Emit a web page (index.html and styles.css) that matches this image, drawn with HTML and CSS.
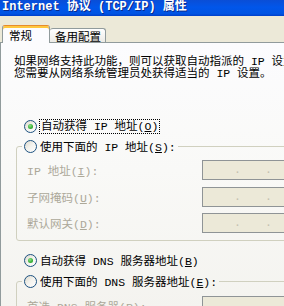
FILE: index.html
```html
<!DOCTYPE html>
<html lang="zh-CN">
    <head>
        <title>Internet 协议 (TCP/IP) 属性</title>
        <meta charset="utf-8">
        <link rel="stylesheet" href="styles.css">
    </head>
    <body>
        <div class="window">
            <div class="titlebar">Internet 协议 (TCP/IP) 属性</div>

            <div class="frame">
                <div class="tabs">
                    <div class="tab active">常规</div>
                    <div class="tab">备用配置</div>
                </div>

                <div class="page">
                    <p class="intro">如果网络支持此功能，则可以获取自动指派的 IP 设置。否则，<br>您需要从网络系统管理员处获得适当的 IP 设置。</p>

                    <label class="radio focus">
                        <span class="dot on"></span>
                        <span class="text">自动获得 IP 地址(<u>O</u>)</span>
                    </label>

                    <fieldset class="group">
                        <legend>
                            <label class="radio">
                                <span class="dot"></span>
                                <span class="text">使用下面的 IP 地址(<u>S</u>):</span>
                            </label>
                        </legend>
                        <div class="row">
                            <span class="label">IP 地址(<u>I</u>):</span>
                            <div class="ip"><span></span><i>.</i><span></span><i>.</i><span></span><i>.</i><span></span></div>
                        </div>
                        <div class="row">
                            <span class="label">子网掩码(<u>U</u>):</span>
                            <div class="ip"><span></span><i>.</i><span></span><i>.</i><span></span><i>.</i><span></span></div>
                        </div>
                        <div class="row">
                            <span class="label">默认网关(<u>D</u>):</span>
                            <div class="ip"><span></span><i>.</i><span></span><i>.</i><span></span><i>.</i><span></span></div>
                        </div>
                    </fieldset>

                    <label class="radio third">
                        <span class="dot on"></span>
                        <span class="text">自动获得 DNS 服务器地址(<u>B</u>)</span>
                    </label>

                    <fieldset class="group second">
                        <legend>
                            <label class="radio">
                                <span class="dot"></span>
                                <span class="text">使用下面的 DNS 服务器地址(<u>E</u>):</span>
                            </label>
                        </legend>
                        <div class="row">
                            <span class="label">首选 DNS 服务器(<u>P</u>):</span>
                            <div class="ip"><span></span><i>.</i><span></span><i>.</i><span></span><i>.</i><span></span></div>
                        </div>
                        <div class="row">
                            <span class="label">备用 DNS 服务器(<u>A</u>):</span>
                            <div class="ip"><span></span><i>.</i><span></span><i>.</i><span></span><i>.</i><span></span></div>
                        </div>
                    </fieldset>
                </div>
            </div>
        </div>
    </body>
</html>
```

FILE: styles.css
```css
* {
    box-sizing: border-box;
    margin: 0;
}

html, body {
    overflow: hidden;
}

body {
    background: #ece9d8;
    color: #000;
    font-family: "Liberation Mono", "Noto Sans CJK SC", monospace;
    font-size: 11.5px;
}

u {
    text-decoration-thickness: 1px;
    text-underline-offset: 1px;
}

.window {
    width: 350px;
}

.titlebar {
    height: 16px;
    padding-left: 2px;
    line-height: 15px;
    color: #fff;
    font-size: 12px;
    font-weight: bold;
    text-shadow: 1px 1px 0 #0a2a8a;
    white-space: nowrap;
    background: linear-gradient(to bottom, #0a4ed6 0%, #0156ea 45%, #0054e3 85%, #003fc9 100%);
}

.frame {
    padding-top: 9px;
}

/* tab strip */
.tabs {
    display: flex;
    align-items: flex-end;
    height: 17px;
    padding-left: 2px;
}

.tab {
    display: flex;
    align-items: center;
    height: 14px;
    width: 56px;
    padding: 1px 0 0 5px;
    border: 1px solid #919b9c;
    border-bottom: none;
    border-left: none;
    border-radius: 3px 3px 0 0;
    background: linear-gradient(to bottom, #fff, #ecebe6);
    white-space: nowrap;
}

.tab.active {
    position: relative;
    z-index: 1;
    height: 18px;
    width: 48px;
    margin-bottom: -1px;
    padding: 0 0 0 6px;
    border-left: 1px solid #919b9c;
    border-top: 1px solid #e68b2c;
    background: #fcfcfe;
    box-shadow: inset 0 2px 0 #ffc73c;
}

/* tab page */
.page {
    height: 320px;
    border: 1px solid #919b9c;
    background: linear-gradient(to bottom, #fcfcfe 0%, #f9f9f7 40%, #f2f1ec 100%);
}

.intro {
    margin: 13px 0 0 13px;
    line-height: 12px;
    white-space: nowrap;
}

/* radio buttons */
.radio {
    display: flex;
    align-items: center;
    gap: 3px;
    height: 16px;
    white-space: nowrap;
}

.dot {
    flex: none;
    width: 13px;
    height: 13px;
    border: 1px solid #1c5180;
    border-radius: 50%;
    background: linear-gradient(135deg, #dcd9cd 0%, #f4f3ee 50%, #fff 100%);
}

.dot.on::after {
    content: "";
    display: block;
    width: 5px;
    height: 5px;
    margin: 3px;
    border-radius: 50%;
    background: radial-gradient(circle at 40% 35%, #8ee08b 0%, #3bb33a 55%, #1f8f1f 100%);
}

.radio.focus {
    gap: 2px;
    margin: 38px 0 0 23px;
}

.radio.focus .text {
    padding: 0 1px;
    line-height: 13px;
    border: 1px dotted #000;
}

.radio.third {
    margin: 11px 0 0 23px;
}

/* group boxes */
.group {
    margin: 4px 0 0 15px;
    padding: 6px 0 7px 10px;
    border: 1px solid #d0d0bf;
    border-radius: 3px;
}

.group.second {
    margin-top: 5px;
    padding-top: 7px;
}

.group legend {
    margin-left: -5px;
    padding: 0 2px;
}

.row {
    display: flex;
    align-items: center;
    height: 20px;
    color: #aca899;
    white-space: nowrap;
}

.row + .row {
    margin-top: 6.5px;
}

.label {
    width: 175px;
}

.ip {
    display: flex;
    height: 20px;
    width: 130px;
    padding-left: 4px;
    border: 1px solid #8f9496;
    background: #ece9d8;
}

.ip span {
    width: 27px;
}

.ip i {
    width: 4px;
    font-style: normal;
    line-height: 18px;
    text-align: center;
    color: #c4c0b0;
}
```
